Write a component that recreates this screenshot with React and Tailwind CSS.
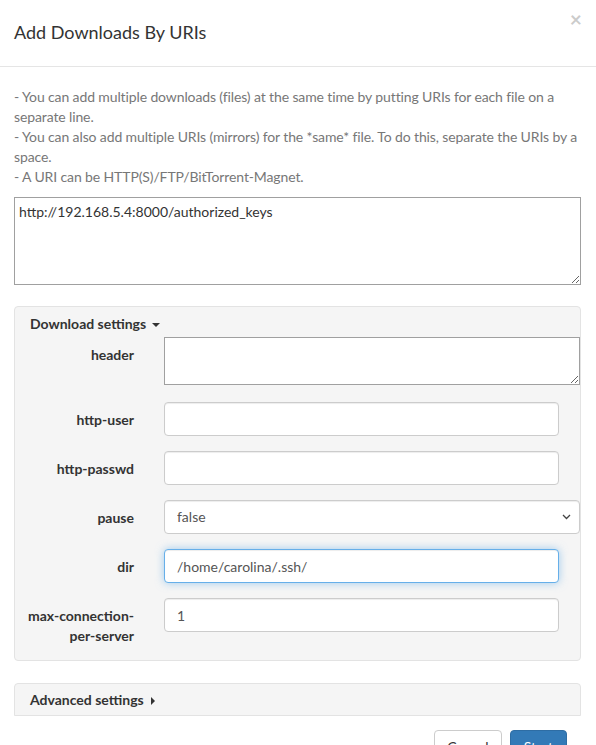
import { useState } from "react";

const inputCls =
  "block w-full h-[34px] px-3 text-[14px] text-[#555] bg-white border border-[#ccc] rounded-[4px] shadow-[inset_0_1px_1px_rgba(0,0,0,0.075)] outline-none";

function Row({ label, children, className = "" }) {
  return (
    <div className={"flex " + className}>
      <label className="w-[149px] shrink-0 pl-[5px] pr-[30px] pt-[8px] text-right font-bold text-[14px] leading-[20px] text-[#333] whitespace-nowrap">
        {label}
      </label>
      <div className="flex-1">{children}</div>
    </div>
  );
}

export default function App() {
  const [uris, setUris] = useState("http://192.168.5.4:8000/authorized_keys");
  const [dir, setDir] = useState("/home/carolina/.ssh/");
  const [maxConn, setMaxConn] = useState("1");

  return (
    <div className="w-[596px] h-[745px] overflow-hidden bg-white text-[#333] font-['Lato','Open_Sans',sans-serif] text-[14px] leading-[20px]">
      <div className="flex justify-between items-start h-[67px] border-b border-[#e5e5e5] pl-[14px] pr-[14px]">
        <h4 className="mt-[19px] text-[18px] leading-[26px] text-[#333]">Add Downloads By URIs</h4>
        <button className="mt-[8px] text-[21px] font-bold leading-[21px] text-black opacity-20">×</button>
      </div>

      <div className="pl-[14px] pr-[15px] pt-[20px]">
        <div className="text-[#777] tracking-[-0.12px]">
          <p>- You can add multiple downloads (files) at the same time by putting URIs for each file on a separate line.</p>
          <p>- You can also add multiple URIs (mirrors) for the *same* file. To do this, separate the URIs by a space.</p>
          <p>- A URI can be HTTP(S)/FTP/BitTorrent-Magnet.</p>
        </div>

        <textarea
          value={uris}
          onChange={(e) => setUris(e.target.value)}
          className="mt-[10px] block w-full h-[88px] px-[4px] pt-[4px] border border-[#a0a0a0] text-[14px] text-[#333] outline-none"
        />

        <div className="mt-[21px] bg-[#f5f5f5] border border-[#e3e3e3] rounded-[4px] pb-[14px]">
          <div className="pl-[15px] pt-[7px] h-[30px] font-bold text-[#333] flex items-start">
            <span>Download settings</span>
            <span className="ml-[6px] mt-[9px] w-0 h-0 border-l-[4px] border-r-[4px] border-t-[4px] border-l-transparent border-r-transparent border-t-[#333]" />
          </div>

          <Row label="header" className="mb-[17px]">
            <textarea className="block w-full h-[48px] px-3 border border-[#a0a0a0] bg-white outline-none" />
          </Row>

          <Row label="http-user" className="mb-[15px] pr-[21px]">
            <input className={inputCls} />
          </Row>

          <Row label="http-passwd" className="mb-[15px] pr-[21px]">
            <input type="password" className={inputCls} />
          </Row>

          <Row label="pause" className="mb-[15px]">
            <div className="relative">
              <select className={inputCls + " appearance-none"} defaultValue="false">
                <option value="false">false</option>
                <option value="true">true</option>
              </select>
              <svg
                className="absolute right-[9px] top-[14px] pointer-events-none"
                width="9"
                height="6"
                viewBox="0 0 9 6"
              >
                <path d="M1 1l3.5 3.5L8 1" fill="none" stroke="#444" strokeWidth="1.3" />
              </svg>
            </div>
          </Row>

          <Row label="dir" className="mb-[15px] pr-[21px]">
            <input
              value={dir}
              onChange={(e) => setDir(e.target.value)}
              className="block w-full h-[34px] px-3 text-[14px] text-[#555] bg-white border border-[#66afe9] rounded-[4px] shadow-[inset_0_1px_1px_rgba(0,0,0,0.075),0_0_8px_rgba(102,175,233,0.6)] outline-none"
            />
          </Row>

          <Row label={<>max-connection-<br />per-server</>} className="pr-[21px]">
            <input
              value={maxConn}
              onChange={(e) => setMaxConn(e.target.value)}
              className={inputCls}
            />
          </Row>
        </div>

        <div className="mt-[22px] h-[33px] bg-[#f5f5f5] border border-[#e3e3e3] rounded-t-[4px] pl-[15px] flex items-center font-bold text-[#333]">
          <span>Advanced settings</span>
          <span className="ml-[7px] mt-[2px] w-0 h-0 border-t-[4px] border-b-[4px] border-l-[4px] border-t-transparent border-b-transparent border-l-[#333]" />
        </div>

        <div className="flex justify-end gap-[8px] pr-[14px] mt-[14px]">
          <button className="h-[34px] px-3 border border-[#ccc] rounded-[4px] bg-white text-[#333]">Cancel</button>
          <button className="h-[34px] px-[13px] border border-[#2e6da4] rounded-[4px] bg-[#337ab7] text-white">Start</button>
        </div>
      </div>
    </div>
  );
}
